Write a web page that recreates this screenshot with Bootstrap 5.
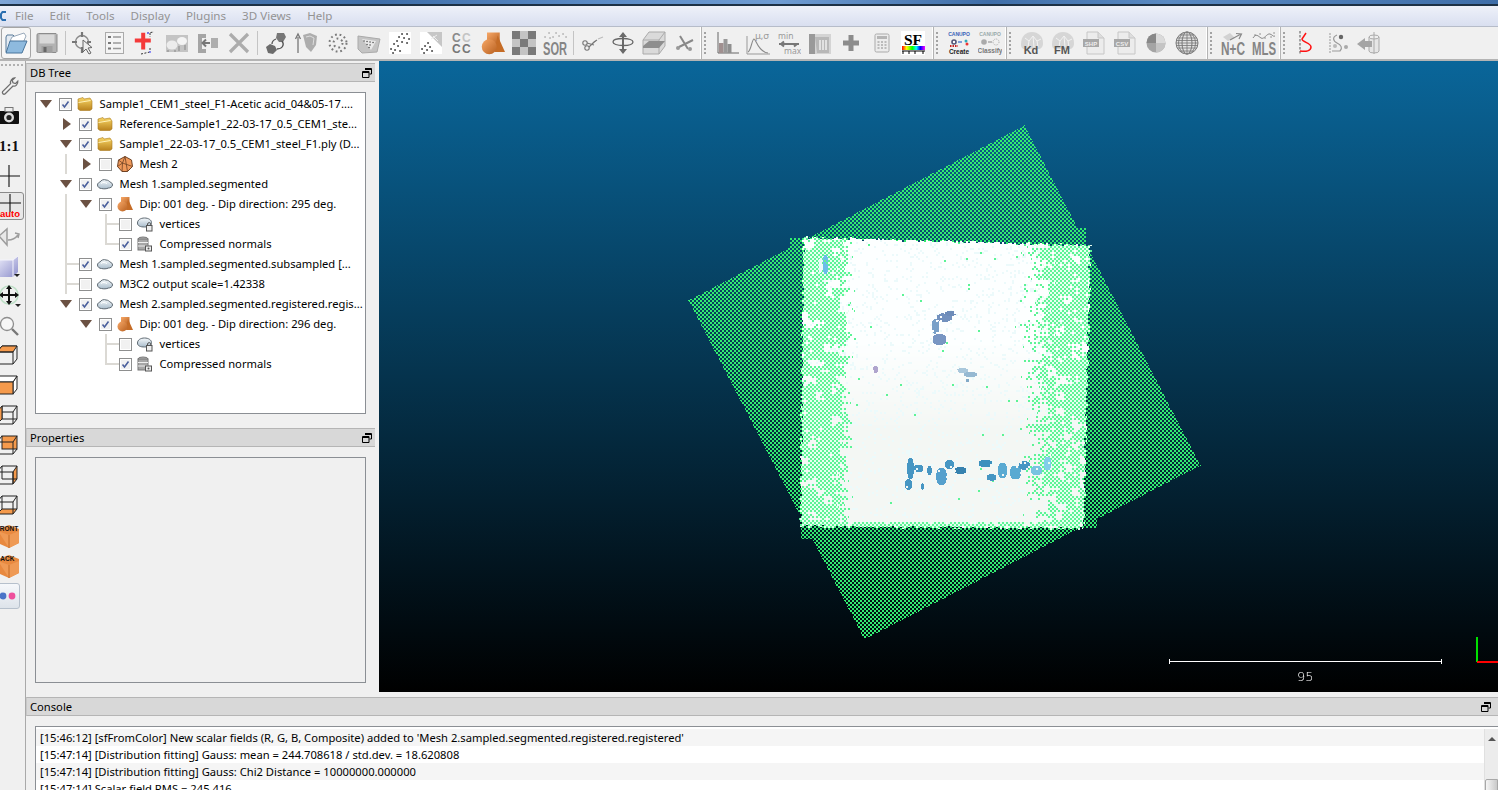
<!DOCTYPE html>
<html lang="en">
<head>
<meta charset="UTF-8">
<title>CloudCompare</title>
<link href="https://cdn.jsdelivr.net/npm/bootstrap@5.3.0/dist/css/bootstrap.min.css" rel="stylesheet">
<style>
    html, body { height: 100%; overflow: hidden; }
    body { background: #f0f0f0; color: #000; font-family: "Noto Sans", "Open Sans", sans-serif; font-size: 11.2px; line-height: 1; }

    .title-strip { height: 6px; flex: none; border-bottom: 2px solid #1d3145; background: linear-gradient(90deg, #7fa6d6 0, #4a78b0 12%, #3f6ea8 25%, #5c8cc6 40%, #6f9cd2 52%, #3f6ea8 66%, #5a8ac2 78%, #3f6ea8 100%); }
    .menu-strip { height: 21px; flex: none; background: linear-gradient(#eef1f9, #d9dff0); border-bottom: 1px solid #b6bcc9; color: #939393; gap: 16px; padding-left: 15px; font-size: 11.6px; }
    .app-logo { width: 7px; height: 14px; margin-left: -15px; margin-right: -8px; }

    .tool-strip { height: 34px; flex: none; border-bottom: 2px solid #b4b4b4; overflow: hidden; }
    .tool-group { height: 100%; border-right: 1px solid #b4b4b4; border-left: 1px solid #fff; }
    .tool-btn { width: 31px; height: 32px; flex: none; }
    .tool-btn svg { width: 24px; height: 24px; display: block; }
    .tool-sep { width: 6px; flex: none; height: 24px; position: relative; }
    .tool-sep::after { content: ""; display: block; width: 1px; height: 100%; margin-left: 3px; background: #c4c4c4; }
    .tool-grip { width: 9px; height: 24px; flex: none; background: radial-gradient(circle, #a3a3a3 0.8px, transparent 1px) 1px 0 / 4px 4px repeat-y; }
    .tool-open { border: 1px solid #a5a5a5; border-radius: 3px; background: #f6f6f6; width: 30px; margin-left: 1px; }

    .main-row { min-height: 0; }
    .main-col { min-width: 0; }
    .side-tools { width: 26px; flex: none; border-right: 1px solid #a9a9a9; overflow: hidden; }
    .side-grip { height: 10px; background: radial-gradient(circle, #b1b1b1 0.8px, transparent 1px) 0 2px / 4px 4px repeat-x; }
    .side-btn { height: 30px; width: 25px; flex: none; }
    .side-btn svg { width: 24px; height: 24px; margin-left: -3px; display: block; flex: none; }
    .side-on { height: 28px; margin: 1px 1px 1px -4px; width: 28px; padding-left: 4px; background: #e8e8e8; border: 1px solid #8a8a8a; border-radius: 3px; }
    .side-flick { height: 26px; margin: 2px 0 2px -4px; width: 24px; padding-left: 4px; background: linear-gradient(#f6f8fb, #dde3ea); border: 1px solid #b6c0cc; border-radius: 3px; }
    .side-flick svg { margin-left: -6px; }

    .dock-col { width: 353px; flex: none; padding: 2px 4px 0 0; }
    .dock-head { height: 19px; flex: none; background: #d8d8d8; border-top: 1px solid #b5b5b5; border-bottom: 1px solid #b5b5b5; border-left: 1px solid #c8c8c8; padding: 1px 3px 0 3px; }
    .dock-float { width: 10px; height: 10px; display: block; }
    .dock-box { margin: 10px 0 0 9px; width: 331px; border: 1px solid #8b8f94; }
    .tree-box { height: 322px; background: #fff; margin-bottom: 14px; padding-top: 1px; overflow: hidden; }
    .props-box { height: 226px; background: #f0f0f0; }

    .tree-row { height: 20px; white-space: nowrap; }
    .tree-cell { width: 20px; height: 20px; flex: none; position: relative; display: block; }
    .tree-v::before, .tree-t::before, .tree-l::before { content: ""; position: absolute; left: 9px; top: 0; width: 2px; height: 100%; background: #dbd9d4; }
    .tree-l::before { height: 11px; }
    .tree-t::after, .tree-l::after { content: ""; position: absolute; left: 9px; top: 9px; width: 14px; height: 2px; background: #dbd9d4; }
    .tree-down::after { content: ""; position: absolute; left: 4px; top: 6px; border-style: solid; border-width: 8px 6px 0; border-color: #6b5142 transparent transparent; }
    .tree-right::after { content: ""; position: absolute; left: 7px; top: 4px; border-style: solid; border-width: 6px 0 6px 8px; border-color: transparent transparent transparent #6b5142; }
    .tree-check.form-check-input { width: 13px; height: 13px; margin: 0 0 0 3px; flex: none; border: 1px solid #8e8f8f; border-radius: 0; background-color: #f1f1f1; box-shadow: inset 0 0 0 1px #fff; opacity: 1; }
    .tree-check.form-check-input:checked { background-color: #f1f1f1; border-color: #8e8f8f; background-size: 11px 11px; background-image: url("data:image/svg+xml,%3csvg xmlns='http://www.w3.org/2000/svg' viewBox='0 0 11 11'%3e%3cpath fill='none' stroke='%234a5f9c' stroke-width='1.6' d='M2.5 5.5l2 2.5 4-5.5'/%3e%3c/svg%3e"); }
    .tree-icon { width: 16px; height: 16px; margin: 0 6.5px 0 5px; flex: none; display: block; }

    .view-row { flex: none; }
    .gl-view { flex: 1; height: 631px; position: relative; background: linear-gradient(#0a669a, #000); overflow: hidden; }
    .gl-cloud { display: block; }
    .scale-bar { position: absolute; left: 790px; top: 598px; width: 273px; height: 5px; border-left: 1px solid #fff; border-right: 1px solid #fff; }
    .scale-bar::after { content: ""; display: block; margin-top: 2px; height: 1px; background: #fff; }
    .scale-num { position: absolute; left: 918px; top: 609px; color: #fff; font-size: 13px; font-family: "DejaVu Sans", sans-serif; font-weight: 200; }
    .axis-y { position: absolute; left: 1097px; top: 576px; width: 2px; height: 25px; background: #00e000; }
    .axis-x { position: absolute; left: 1098px; top: 600px; width: 21px; height: 2px; background: #f00; }

    .console-wrap { flex: 1; min-height: 0; margin-top: 5px; }
    .console-box { margin: 10px 0 0 9px; border: 1px solid #8b8f94; border-bottom: 0; border-right: 0; flex: 1; min-height: 0; overflow: hidden; background: #fff; padding-top: 2px; }
    .console-rows { flex: 1; min-width: 0; }
    .console-row.list-group-item { height: 17px; padding: 0 0 0 4px; border: 0; border-radius: 0; font-size: 11.2px; line-height: 17px; background: #fff; color: #000; white-space: nowrap; }
    .console-row.list-group-item:nth-child(odd) { background: #f5f5f5; }
    .console-scroll { width: 14px; flex: none; background: #ececec; border-left: 1px solid #e0e0e0; }
    .scroll-up { height: 50px; flex: none; padding-top: 8px; }
    .scroll-up::after { content: ""; display: block; margin-left: 3px; border-style: solid; border-width: 0 4px 4px; width: 0; border-color: transparent transparent #555; }
    .scroll-thumb { height: 30px; flex: none; background: linear-gradient(90deg, #f6f6f6, #c9c9c9); border: 1px solid #a8a8a8; border-radius: 2px 0 0 0; }

    .ic-t { font-family: "Liberation Sans", sans-serif; font-weight: 700; }
    .ic-s { font-family: "Liberation Serif", serif; font-weight: 700; }
    .ic-n { font-family: "Liberation Sans Narrow", "Liberation Sans", sans-serif; font-weight: 700; }
</style>
</head>
<body class="d-flex flex-column">

<svg width="0" height="0" class="d-block">
    <defs>
        <linearGradient id="g-folder" x1="0" y1="0" x2="0" y2="1"><stop offset="0" stop-color="#f9d766"/><stop offset="1" stop-color="#b9821d"/></linearGradient>
        <linearGradient id="g-orange" x1="0" y1="0" x2="1" y2="1"><stop offset="0" stop-color="#f7a868"/><stop offset="1" stop-color="#b8601f"/></linearGradient>
        <linearGradient id="g-cloud" x1="0" y1="0" x2="0" y2="1"><stop offset="0" stop-color="#f4f8fb"/><stop offset="1" stop-color="#a9bccb"/></linearGradient>
        <linearGradient id="g-lilac" x1="0" y1="0" x2="1" y2="1"><stop offset="0" stop-color="#eeeefb"/><stop offset="1" stop-color="#8e90cc"/></linearGradient>
        <linearGradient id="g-bar" x1="0" y1="0" x2="1" y2="0"><stop offset="0" stop-color="#f00"/><stop offset=".2" stop-color="#ff0"/><stop offset=".45" stop-color="#0f0"/><stop offset=".62" stop-color="#0ff"/><stop offset=".8" stop-color="#00f"/><stop offset="1" stop-color="#f0f"/></linearGradient>

        <symbol id="t-folder" viewBox="0 0 16 16"><path d="M1 3l5-1.500 1 1.500 6-1 2 3v8l-2 1.500H3L1 13z" fill="url(#g-folder)" stroke="#a97a1f" stroke-width=".6"/><path d="M1.500 6.500l12-2" stroke="#fff2b8" stroke-width="1"/></symbol>
        <symbol id="t-cloud" viewBox="0 0 16 16"><path d="M.5 9c0-2 1.500-2.500 2.500-3 1-2 4-3 6-2 2 0 3 1 4 2 1.500.500 2.500 1.500 2.500 3 0 2-2.500 3-4 3-2 1-5 1-7 .500C2.500 12.500.5 11 .5 9z" fill="url(#g-cloud)" stroke="#5f6a73" stroke-width="1"/><path d="M4 7.500c2-1.500 4-1 6 0" stroke="#fff" fill="none"/></symbol>
        <symbol id="t-cloudlock" viewBox="0 0 16 16"><path d="M.5 7c0-3 3-5 7-5 4 0 7 2 7 4.500S11.500 11 7.500 11 .5 10 .5 7z" fill="url(#g-cloud)" stroke="#5f6a73"/><rect x="9.500" y="9.500" width="5.500" height="5.500" fill="#eee" stroke="#555"/><path d="M10.500 9.500V8a1.800 1.800 0 0 1 3.500 0v1.500" fill="none" stroke="#555"/></symbol>
        <symbol id="t-dblock" viewBox="0 0 16 16"><ellipse cx="6" cy="3" rx="5" ry="2" fill="#b9b9b9" stroke="#777"/><rect x="1" y="3" width="10" height="11" fill="#a7a7a7" stroke="#777"/><path d="M1 6.500h10M1 10h10" stroke="#eee"/><rect x="8.500" y="10" width="6" height="5" fill="#eee" stroke="#555"/><circle cx="11.500" cy="12.500" r="1" fill="#555"/></symbol>
        <symbol id="t-mesh" viewBox="0 0 16 16"><path d="M8 .5l6.500 3.500 1 6.500L10.500 15.500H5L.5 10.500l1-6.500z" fill="#f0995a" stroke="#6e4224"/><path d="M8 .5L5.500 7 .5 10.500M5.500 7l10 3.500M5.500 7l-.5 8.500M8 .5l2.500 15M1.500 4l4 3" stroke="#6e4224" stroke-width=".8" fill="none"/></symbol>
        <symbol id="t-dip" viewBox="0 0 16 16"><rect x="4" y="1" width="8.500" height="8" fill="url(#g-orange)"/><path d="M11 3l5 11h-7z" fill="#c56c26"/><circle cx="5.500" cy="10.500" r="5" fill="url(#g-orange)"/></symbol>

        <symbol id="i-open" viewBox="0 0 24 24"><path d="M2 21V6l1-2h6l2 2h3v4" fill="#e4ebf2" stroke="#587a99"/><path d="M6 10l2-4 12-4 2 3-3 7z" fill="#fff" stroke="#9ab"/><path d="M2 22l4-12h17l-5 12z" fill="#8ebade" stroke="#48759c"/></symbol>
        <symbol id="i-save" viewBox="0 0 24 24"><path d="M2 4a1.500 1.500 0 0 1 1.500-1.500H21l1 1v17l-1 1H3.500L2 21z" fill="#b3b3b3" stroke="#8b8b8b"/><rect x="4.500" y="3.500" width="15" height="9" fill="#d8d8d8"/><rect x="6.500" y="15" width="11" height="7" fill="#a0a0a0"/><rect x="8.500" y="16" width="3" height="5" fill="#666"/></symbol>
        <symbol id="i-target" viewBox="0 0 24 24"><circle cx="10" cy="11" r="6.500" fill="none" stroke="#8a8a8a" stroke-width="1.400"/><path d="M10 1v5M10 16v6M0 11h5M15 11h4" stroke="#777" stroke-width="2.200"/><path d="M11 9v12l3-3 3 5 2-1-3-5 4-.5z" fill="#eee" stroke="#666"/></symbol>
        <symbol id="i-list" viewBox="0 0 24 24"><rect x="2.500" y="1.500" width="18" height="21" fill="#f4f4f4" stroke="#aaa"/><path d="M5 6h3M5 12h3M5 17.500h3" stroke="#777" stroke-width="2"/><path d="M10 6h8M10 12h8M10 17.500h8" stroke="#999" stroke-width="1.500"/></symbol>
        <symbol id="i-redplus" viewBox="0 0 24 24"><path d="M9 1h5v7h7v5h-7v9H9v-9H1V8h8z" transform="translate(0 1) scale(.8)" fill="#f43a3a"/><path d="M13 2l7-1M16 2v4M16 17v4M7 23l9-2" stroke="#333" stroke-dasharray="2 1.500" fill="none"/><circle cx="14" cy="2" r="1" fill="#77f"/><circle cx="16" cy="21" r="1" fill="#77f"/></symbol>
        <symbol id="i-sheep" viewBox="0 0 24 24"><rect x="1" y="4" width="22" height="17" fill="#c4c4c4"/><ellipse cx="7" cy="14" rx="5.500" ry="4.500" fill="#ececec"/><ellipse cx="17" cy="10" rx="5" ry="4" fill="#f4f4f4"/><path d="M3 19v2M10 19v2M14 15v5M20 14v5" stroke="#888"/></symbol>
        <symbol id="i-arrowbox" viewBox="0 0 24 24"><path d="M2 3h8v4H6v11h4v4H2z" fill="#a5a5a5"/><rect x="15" y="7" width="7" height="10" fill="#aeaeae"/><path d="M7 12h7M10 8.500L6.500 12l3.500 3.500" stroke="#777" stroke-width="2" fill="none"/></symbol>
        <symbol id="i-x" viewBox="0 0 24 24"><path d="M3 3l18 18M21 3L3 21" stroke="#acacac" stroke-width="3.200"/></symbol>
        <symbol id="i-blobs" viewBox="0 0 24 24"><path d="M13 2h7l2 4-3 5h-4l-3-4z" fill="#777"/><path d="M2 16l4-3 5 2 2 4-4 4-5-1z" fill="#6c6c6c"/><path d="M18 10c3 4 0 8-5 8" fill="none" stroke="#555" stroke-width="1.300"/><path d="M12 8c-3 1-4 3-4 5" fill="none" stroke="#555" stroke-width="1.300"/></symbol>
        <symbol id="i-shield" viewBox="0 0 24 24"><path d="M3 22V6M0.500 8L3 3l2.500 5" stroke="#777" stroke-width="1.300" fill="none"/><path d="M8 4l7-2 7 3-1 9-5 7-5-5z" fill="#adadad"/><path d="M11 6l4-1 4 2-1 7" stroke="#ddd" fill="none"/></symbol>
        <symbol id="i-ring" viewBox="0 0 24 24"><circle cx="12" cy="12" r="8.500" fill="none" stroke="#7a7a7a" stroke-width="2" stroke-dasharray="1.800 2.800"/><circle cx="12" cy="12" r="4.500" fill="none" stroke="#7a7a7a" stroke-width="2" stroke-dasharray="1.800 3"/></symbol>
        <symbol id="i-tile" viewBox="0 0 24 24"><path d="M1 5l22 3-3 13-15 1-4-4z" fill="#c4c4c4" stroke="#aaa"/><path d="M5 8l14 2-5 9z" fill="#eaeaea"/><path d="M7 10h.1M10 10.500h.1M13 11h.1M16 11.500h.1M10 13.500h.1M13 14h.1M12 16.500h.1" stroke="#555" stroke-width="1.500" stroke-linecap="round"/></symbol>
        <symbol id="i-dots" viewBox="0 0 24 24"><rect x="1" y="1" width="22" height="22" fill="#fff"/><path d="M14 3h.1M19 3h.1M11 6h.1M16 7h.1M21 8h.1M9 10h.1M14 11h.1M19 12h.1M6 13h.1M10 15h.1M3 18h.1M7 19h.1M12 20h.1M5 22h.1" stroke="#555" stroke-width="2" stroke-linecap="round"/></symbol>
        <symbol id="i-dots2" viewBox="0 0 24 24"><rect x="1" y="1" width="22" height="22" fill="#fff"/><path d="M8 1h15v15z" fill="#c6c6c6"/><path d="M14 5l5 5M12 8l6-4" stroke="#eee"/><path d="M9 12h.1M6 15h.1M11 16h.1M3 18h.1M8 19h.1M13 20h.1M5 22h.1" stroke="#555" stroke-width="2" stroke-linecap="round"/></symbol>
        <symbol id="i-cc" viewBox="0 0 24 24"><text x="2" y="11" font-size="12" class="ic-t" fill="#8a8a8a">C</text><text x="12" y="11" font-size="12" class="ic-t" fill="#c4c4c4">C</text><text x="2" y="22" font-size="12" class="ic-t" fill="#777">C</text><text x="12" y="22" font-size="12" class="ic-t" fill="#777">C</text></symbol>
        <symbol id="i-check" viewBox="0 0 24 24"><rect width="24" height="24" fill="#c4c4c4"/><path d="M0 0h8v8H0zM16 0h8v8h-8zM8 8h8v8H8zM0 16h8v8H0zM16 16h8v8h-8z" fill="#7a7a7a"/></symbol>
        <symbol id="i-sor" viewBox="0 0 24 24"><text x="0" y="24" font-size="18" class="ic-n" fill="#858585" textLength="24" lengthAdjust="spacingAndGlyphs">SOR</text><path d="M2 6h.1M6 2h.1M10 6h.1M13 2h.1M16 5h.1M20 3h.1M23 6h.1M7 7h.1" stroke="#888" stroke-width="1.300" stroke-linecap="round"/></symbol>
        <symbol id="i-scissors" viewBox="0 0 24 24"><circle cx="5" cy="12" r="2.200" fill="none" stroke="#777" stroke-width="1.100"/><circle cx="7" cy="17" r="2.200" fill="none" stroke="#777" stroke-width="1.100"/><path d="M7 12l7 2M9 16l5-5 3-2" stroke="#777" stroke-width="1.100"/><path d="M18 8l5-2" stroke="#bbb" stroke-width="1.100"/></symbol>
        <symbol id="i-move" viewBox="0 0 24 24"><path d="M12 1l4 5h-3v12h3l-4 5-4-5h3V6H8z" fill="#6a6a6a"/><path d="M2 11c0-2 4-3.500 10-3.500S22 9 22 11s-4 3.500-10 3.500S2 13 2 11z" fill="none" stroke="#666" stroke-width="1.300"/></symbol>
        <symbol id="i-box" viewBox="0 0 24 24"><path d="M1 9l6-8h16v14l-6 8H1z" fill="#dadada" stroke="#aaa"/><path d="M1 9h16V23M17 9l6-8" stroke="#aaa" fill="none"/><path d="M1 15l6-5h16l-6 7H1z" fill="#8e8e8e"/></symbol>
        <symbol id="i-cut" viewBox="0 0 24 24"><path d="M7 5l8 13M20 9L6 16" stroke="#888" stroke-width="2" fill="none"/><circle cx="17" cy="18" r="2" fill="#999"/><circle cx="5" cy="17" r="2" fill="#999"/></symbol>
        <symbol id="i-hist" viewBox="0 0 24 24"><path d="M3 1v21h21" stroke="#666" fill="none"/><rect x="4" y="12" width="4.500" height="10" fill="#a09090"/><rect x="8.500" y="8" width="4" height="14" fill="#999"/><rect x="12.500" y="13" width="4" height="9" fill="#8f8f8f"/></symbol>
        <symbol id="i-gauss" viewBox="0 0 24 24"><path d="M1 5v18h23" stroke="#999" fill="none"/><path d="M2 21c3-1 4-13 6-13s4 13 14 14" stroke="#888" fill="none" stroke-width="1.100"/><text x="9" y="8" font-size="9.500" fill="#999">μ,σ</text></symbol>
        <symbol id="i-minmax" viewBox="0 0 24 24"><text x="1" y="8" font-size="8.500" fill="#999">min</text><text x="7" y="23" font-size="8.500" fill="#999">max</text><path d="M2 13h20M4 13l3-2.500M4 13l3 2.500M20 13l-3 2.500" stroke="#777" stroke-width="2" fill="none"/></symbol>
        <symbol id="i-trash" viewBox="0 0 24 24"><rect x="1" y="3" width="22" height="20" fill="#d4d4d4"/><rect x="1" y="3" width="6" height="20" fill="#999"/><path d="M7 6h14v16H9z" fill="#b8b8b8"/><path d="M12 9v10M15 9v10M18 9v10" stroke="#eee" stroke-width="1.500"/></symbol>
        <symbol id="i-plus" viewBox="0 0 24 24"><path d="M9.500 4h5v5.500H20v5h-5.500V20h-5v-5.500H4v-5h5.500z" fill="#8c8c8c"/></symbol>
        <symbol id="i-calc" viewBox="0 0 24 24"><rect x="5" y="3" width="14" height="18" rx="1.500" fill="#ececec" stroke="#aaa"/><rect x="7" y="5" width="10" height="3" fill="#b5b5b5"/><path d="M7.500 11h9M7.500 14h9M7.500 17h9" stroke="#aaa" stroke-width="1.500" stroke-dasharray="2 1.500"/></symbol>
        <symbol id="i-sf" viewBox="0 0 24 24"><rect width="24" height="24" fill="#fff"/><text x="12" y="14" font-size="15.500" text-anchor="middle" class="ic-s" fill="#000">SF</text><rect x="1" y="15" width="23" height="4" fill="url(#g-bar)"/><path d="M1 20h23M2 20v3M8 20v3M14 20v3M22 20v3" stroke="#000"/></symbol>
        <symbol id="i-canu" viewBox="0 0 24 24"><text x="12" y="5" font-size="5" text-anchor="middle" class="ic-t" fill="#3a62b8">CANUPO</text><circle cx="7" cy="11" r="2.800" fill="#557"/><circle cx="7" cy="11" r="1.200" fill="#fff"/><path d="M11 11h4" stroke="#36c" stroke-width="1.200"/><circle cx="19" cy="10" r="1.500" fill="#3ab"/><circle cx="20" cy="13" r="1.500" fill="#e33"/><path d="M3 15h8" stroke="#c22" stroke-width="2" stroke-dasharray="1.500 1"/><text x="12" y="23" font-size="6.500" class="ic-t" text-anchor="middle" fill="#222">Create</text></symbol>
        <symbol id="i-canu2" viewBox="0 0 24 24"><text x="12" y="5" font-size="5" text-anchor="middle" class="ic-t" fill="#9aa">CANUPO</text><circle cx="6" cy="11" r="2.800" fill="#aaa"/><path d="M10 11h4" stroke="#999" stroke-width="1.200"/><circle cx="18" cy="11" r="3" fill="none" stroke="#aaa" stroke-dasharray="1 1"/><text x="12" y="22" font-size="6.500" class="ic-t" text-anchor="middle" fill="#777">Classify</text></symbol>
        <symbol id="i-brain" viewBox="0 0 24 24"><path d="M1 13C1 5 6 1 12 1s11 4 11 11c0 4-2 6-5 6H5c-3 0-4-2-4-5z" fill="#d6d6d6"/><path d="M5 7l4 3 4-5 4 5 4-2M9 10l-1 6M13 5l1 11M17 10l1 6" stroke="#f2f2f2" fill="none"/></symbol>
        <symbol id="i-shp" viewBox="0 0 24 24"><path d="M5 1h11l6 6v16H5z" fill="#ececec" stroke="#c6c6c6"/><path d="M16 1v6h6" fill="#ddd" stroke="#c6c6c6"/><rect x="1" y="8" width="16" height="8" fill="#a8a8a8"/></symbol>
        <symbol id="i-pie" viewBox="0 0 24 24"><circle cx="12" cy="12" r="9.500" fill="#a4a4a4"/><path d="M12 12L12 2.500A9.500 9.500 0 0 1 21.500 12z" fill="#dadada"/><path d="M12 12L2.500 12A9.500 9.500 0 0 1 12 2.500z" fill="#888"/><path d="M12 12L21.500 12A9.500 9.500 0 0 1 12 21.500z" fill="#c4c4c4"/></symbol>
        <symbol id="i-globe" viewBox="0 0 24 24"><circle cx="12" cy="12" r="11" fill="#e2e2e2" stroke="#777"/><ellipse cx="12" cy="12" rx="5" ry="11" fill="none" stroke="#777"/><ellipse cx="12" cy="12" rx="8.500" ry="11" fill="none" stroke="#888"/><path d="M12 1v22M1 12h22M2 7h20M2 17h20M5 4h14M5 20h14M1.500 9.500h21M1.500 14.500h21" stroke="#777" stroke-width=".8"/></symbol>
        <symbol id="i-nc" viewBox="0 0 24 24"><path d="M2 6l7-4 5 5-7 3z" fill="#d2d2d2"/><path d="M9 9l11-6M15 2.500l5.500.5-2.500 5" stroke="#888" fill="none" stroke-width="1.200"/><text x="0" y="24" font-size="18" class="ic-n" fill="#858585" textLength="24" lengthAdjust="spacingAndGlyphs">N+C</text></symbol>
        <symbol id="i-mls" viewBox="0 0 24 24"><path d="M1 7c3-5 5-2 8 0s6-5 9-4 3 3 5 2" fill="none" stroke="#888"/><path d="M3 4h.1M8 3h.1M13 7h.1M19 6h.1M22 2h.1" stroke="#888" stroke-width="1.500" stroke-linecap="round"/><text x="0" y="24" font-size="18" class="ic-n" fill="#858585" textLength="24" lengthAdjust="spacingAndGlyphs">MLS</text></symbol>
        <symbol id="i-redS" viewBox="0 0 24 24"><path d="M6 0v24" stroke="#555" stroke-dasharray="2.500 1.500"/><path d="M12 2l-4 6c0 3 9 4 9 8s-5 5-11 4" fill="none" stroke="#f11" stroke-width="1.500"/></symbol>
        <symbol id="i-sdots" viewBox="0 0 24 24"><path d="M5 2v20" stroke="#999" stroke-dasharray="2 1"/><path d="M12 4C7 6 8 10 12 12s6 5 3 8l-8 0" fill="none" stroke="#999" stroke-width="1.200"/><circle cx="16" cy="6" r="2.200" fill="#666"/><circle cx="21" cy="16" r="2" fill="#aaa"/><circle cx="10" cy="15" r="2" fill="#bbb"/></symbol>
        <symbol id="i-cyl" viewBox="0 0 24 24"><path d="M13 6v14a5 2 0 0 0 10 0V6" fill="#e6e6e6" stroke="#aaa"/><ellipse cx="18" cy="6" rx="5" ry="2" fill="#eee" stroke="#aaa"/><path d="M18 1v22" stroke="#aaa"/><path d="M1 13l8-6v3h7v6H9v3z" fill="#a5a5a5"/></symbol>

        <symbol id="s-wrench" viewBox="-3 -3 30 30"><path d="M19 2l-3 3 1 3 3 1 3-3c.5 4-3 7-6 6L7 22c-2 1-4-1-3-3L14 9c-1-3 2-7 5-7z" fill="#f1f1f1" stroke="#6d6d6d" stroke-width="1.600"/></symbol>
        <symbol id="s-camera" viewBox="0 0 24 24"><rect x="2" y="7" width="20" height="13" rx="1" fill="#111"/><rect x="8" y="3.500" width="8" height="4" fill="#eee" stroke="#777"/><circle cx="12" cy="13.500" r="5" fill="#ddd"/><circle cx="12" cy="13.500" r="2.600" fill="#222"/></symbol>
        <symbol id="s-cross" viewBox="0 0 24 24"><path d="M12 1v22M1 12h22" stroke="#111" stroke-width="1.100"/></symbol>
        <symbol id="s-auto" viewBox="0 0 24 24"><path d="M12 0v18M1 9h22" stroke="#111" stroke-width="1.100"/><text x="12" y="23" font-size="9.500" text-anchor="middle" class="ic-t" fill="#f00">auto</text></symbol>
        <symbol id="s-cone" viewBox="0 0 24 24"><path d="M2 12l8-7v16z" fill="#e8e8e8" stroke="#9c9c9c" stroke-width="1.500"/><path d="M11 16c4 0 7-1 10-5M18 9l4 1-1 4" stroke="#9c9c9c" stroke-width="1.500" fill="none"/></symbol>
        <symbol id="s-lilac" viewBox="0 0 24 24"><path d="M0 6h16l5-4v16l-5 5H0z" fill="url(#g-lilac)"/><path d="M0 6h16l5-4M16 6v17" stroke="#f4f4fc" fill="none"/><path d="M17 20h6l-3 3z" fill="#222"/></symbol>
        <symbol id="s-rot" viewBox="0 0 24 24"><circle cx="12" cy="11" r="9" fill="none" stroke="#bfe0c8" stroke-width="1.500"/><path d="M12 1l3 4h-2v5h5V8l4 3-4 3v-2h-5v5h2l-3 4-3-4h2v-5H6v2l-4-3 4-3v2h5V5H9z" fill="#111"/><path d="M18 20h6l-3 3z" fill="#222"/></symbol>
        <symbol id="s-zoom" viewBox="0 0 24 24"><circle cx="10" cy="10" r="6.500" fill="#f7f7f7" stroke="#8e8e8e" stroke-width="1.300"/><path d="M15 15l6 6" stroke="#777" stroke-width="2.400"/></symbol>
        <symbol id="s-cube-top" viewBox="0 0 24 24"><path d="M0 8l5-6h15v13l-4 5H0z" fill="none" stroke="#222"/><path d="M0 8l5-6h15l-4 6z" fill="#f59a4c" stroke="#222"/><path d="M0 8h16v12" fill="none" stroke="#222"/></symbol>
        <symbol id="s-cube-front" viewBox="0 0 24 24"><path d="M16 8l4-6v13l-4 5z" fill="#fff" stroke="#222"/><path d="M0 2h20l-4 6H0z" fill="#fff" stroke="#222"/><rect x="-1" y="8" width="17" height="12" fill="#f59a4c" stroke="#222"/></symbol>
        <symbol id="s-cube-left" viewBox="0 0 24 24"><path d="M5 2h15v13H5z" fill="none" stroke="#222"/><path d="M0 8h16v12H0z" fill="none" stroke="#222"/><path d="M0 8l5-6v13l-5 5z" fill="#f59a4c" stroke="#222"/><path d="M16 8l4-6M16 20l4-5" stroke="#222"/></symbol>
        <symbol id="s-cube-back" viewBox="0 0 24 24"><rect x="5" y="2" width="15" height="13" fill="#f59a4c" stroke="#222"/><path d="M0 8h16v12H0zM0 8l5-6M16 8l4-6M16 20l4-5" fill="none" stroke="#222"/></symbol>
        <symbol id="s-cube-right" viewBox="0 0 24 24"><path d="M16 8l4-6v13l-4 5z" fill="#f59a4c" stroke="#222"/><path d="M0 8l5-6h15M0 8h16v12H0zM5 2v13h15" fill="none" stroke="#222"/></symbol>
        <symbol id="s-cube-bot" viewBox="0 0 24 24"><path d="M0 20l5-5h15l-4 5z" fill="#f59a4c" stroke="#222"/><path d="M0 8l5-6h15v13M0 8h16v12M0 8v12M16 8l4-6M5 2v13" fill="none" stroke="#222"/></symbol>
        <symbol id="s-front" viewBox="0 0 24 24"><path d="M12 1l10 4v14l-10 5L1 19V5z" fill="#e8893f"/><path d="M1 7l11 4 10-4v12l-10 5z" fill="#ef9a55"/><path d="M12 11v13" stroke="#c46a26"/><text x="10" y="7" font-size="6.500" class="ic-t" text-anchor="middle" fill="#111">FRONT</text></symbol>
        <symbol id="s-back" viewBox="0 0 24 24"><path d="M12 1l10 4v14l-10 5L1 19V5z" fill="#e8893f"/><path d="M1 7l11 4 10-4v12l-10 5z" fill="#ef9a55"/><path d="M12 11v13" stroke="#c46a26"/><text x="8" y="7" font-size="6.500" class="ic-t" text-anchor="middle" fill="#111">BACK</text></symbol>
        <symbol id="s-flick" viewBox="0 0 24 24"><circle cx="8" cy="12" r="3.400" fill="#4a74c8"/><circle cx="17" cy="12" r="3.400" fill="#ee4f9c"/></symbol>
        <symbol id="d-float" viewBox="0 0 10 10"><path d="M3 .5h6.500V6H7.500M.5 3.500h6.500v6H.5z" fill="none" stroke="#000"/><path d="M3 1.500h6.500M.5 4.500h6.500" stroke="#000"/></symbol>
    </defs>
</svg>

<div class="title-strip"></div>

<nav class="menu-strip d-flex align-items-center">
    <svg class="app-logo" viewBox="0 0 7 14"><path d="M6 3H2.500L1 5v4l1.500 2H6" fill="none" stroke="#2b6fb0" stroke-width="2"/></svg>
    <span>File</span><span>Edit</span><span>Tools</span><span>Display</span><span>Plugins</span><span>3D Views</span><span>Help</span>
</nav>

<div class="tool-strip d-flex align-items-start">
    <div class="d-flex align-items-center" id="bar1"></div>
    <div class="tool-group"></div>
    <div class="tool-grip align-self-center"></div>
    <div class="d-flex align-items-center" id="bar2"></div>
    <div class="tool-group ms-1"></div>
    <div class="tool-grip align-self-center"></div>
    <div class="d-flex align-items-center" id="bar3"></div>
    <div class="tool-group"></div>
    <div class="tool-grip align-self-center"></div>
    <div class="d-flex align-items-center" id="bar4"></div>
    <div class="tool-group ms-1"></div>
    <div class="tool-grip align-self-center"></div>
    <div class="d-flex align-items-center" id="bar5"></div>
    <div class="tool-group"></div>
    <div class="tool-grip align-self-center"></div>
    <div class="d-flex align-items-center" id="bar6"></div>
</div>

<div class="main-row d-flex flex-grow-1">
    <div class="side-tools d-flex flex-column">
        <div class="side-grip"></div>
        <div id="sidebar" class="d-flex flex-column"></div>
    </div>

    <div class="main-col d-flex flex-column flex-grow-1">
        <div class="view-row d-flex">
            <div class="dock-col d-flex flex-column">
                <div class="dock-head d-flex align-items-center justify-content-between"><span>DB Tree</span><svg class="dock-float"><use href="#d-float"/></svg></div>
                <div class="dock-box tree-box" id="tree"></div>
                <div class="dock-head d-flex align-items-center justify-content-between"><span>Properties</span><svg class="dock-float"><use href="#d-float"/></svg></div>
                <div class="dock-box props-box"></div>
            </div>
            <div class="gl-view">
                <canvas class="gl-cloud" id="cloud" width="1119" height="631"></canvas>
                <div class="scale-bar"></div>
                <div class="scale-num">95</div>
                <div class="axis-y"></div>
                <div class="axis-x"></div>
            </div>
        </div>

        <div class="console-wrap d-flex flex-column">
            <div class="dock-head d-flex align-items-center justify-content-between"><span>Console</span><svg class="dock-float me-1"><use href="#d-float"/></svg></div>
            <div class="console-box d-flex">
                <div class="console-rows list-group">
                    <div class="console-row list-group-item">[15:46:12] [sfFromColor] New scalar fields (R, G, B, Composite) added to 'Mesh 2.sampled.segmented.registered.registered'</div>
                    <div class="console-row list-group-item">[15:47:14] [Distribution fitting] Gauss: mean = 244.708618 / std.dev. = 18.620808</div>
                    <div class="console-row list-group-item">[15:47:14] [Distribution fitting] Gauss: Chi2 Distance = 10000000.000000</div>
                    <div class="console-row list-group-item">[15:47:14] Scalar field RMS = 245.416</div>
                </div>
                <div class="console-scroll d-flex flex-column"><div class="scroll-up"></div><div class="scroll-thumb"></div></div>
            </div>
        </div>
    </div>
</div>

<script>
    // toolbars: icon ids, "|" is a thin separator
    function fillBar(id, items) {
        document.getElementById(id).innerHTML = items.map(function (name) {
            if (name === '|') return '<div class="tool-sep"></div>';
            var extra = name === 'i-open' ? ' tool-open' : '';
            return '<div class="tool-btn d-flex align-items-center justify-content-center' + extra + '"><svg><use href="#' + name + '"/></svg></div>';
        }).join('');
    }
    fillBar('bar1', ['i-open', 'i-save', '|', 'i-target', 'i-list', 'i-redplus', 'i-sheep', 'i-arrowbox', 'i-x', '|', 'i-blobs', 'i-shield', 'i-ring', 'i-tile', 'i-dots', 'i-dots2', 'i-cc', 't-dip', 'i-check', 'i-sor', '|', 'i-scissors', 'i-move', 'i-box', 'i-cut']);
    fillBar('bar2', ['i-hist', 'i-gauss', 'i-minmax', 'i-trash', 'i-plus', 'i-calc', 'i-sf']);
    fillBar('bar3', ['i-canu', 'i-canu2']);
    fillBar('bar4', ['b-Kd', 'b-FM', 'd-SHP', 'd-CSV', 'i-pie', 'i-globe']);
    fillBar('bar5', ['i-nc', 'i-mls']);
    fillBar('bar6', ['i-redS', 'i-sdots', 'i-cyl']);

    // brain and document icons carry a label as real text
    document.querySelectorAll('#bar4 svg').forEach(function (svg) {
        var ref = svg.querySelector('use').getAttribute('href').slice(1);
        var kind = ref.split('-')[0], label = ref.split('-')[1];
        if (kind === 'b') {
            svg.setAttribute('viewBox', '0 0 24 24');
            svg.innerHTML = '<use href="#i-brain" width="24" height="24"/><text x="11" y="23" font-size="11" text-anchor="middle" class="ic-t" fill="#555">' + label + '</text>';
        } else if (kind === 'd') {
            svg.setAttribute('viewBox', '0 0 24 24');
            svg.innerHTML = '<use href="#i-shp" width="24" height="24"/><text x="9" y="14.5" font-size="6" text-anchor="middle" class="ic-t" fill="#eee">' + label + '</text>';
        }
    });

    // left vertical toolbar
    var side = [['s-wrench'], ['s-camera'], ['one'], ['s-cross'], ['s-auto', 'side-on'], ['s-cone'], ['s-lilac'], ['s-rot'], ['s-zoom'],
        ['s-cube-top'], ['s-cube-front'], ['s-cube-left'], ['s-cube-back'], ['s-cube-right'], ['s-cube-bot'], ['s-front'], ['s-back'], ['s-flick', 'side-flick']];
    document.getElementById('sidebar').innerHTML = side.map(function (s) {
        var inner = s[0] === 'one'
            ? '<svg viewBox="0 0 24 24"><text x="12" y="17" font-size="15" text-anchor="middle" class="ic-s" fill="#111">1:1</text></svg>'
            : '<svg><use href="#' + s[0] + '"/></svg>';
        return '<div class="side-btn d-flex align-items-center ' + (s[1] || '') + '">' + inner + '</div>';
    }).join('');

    // DB tree: columns before arrow, arrow kind, checked, icon, label
    var rows = [
        [[], 'down', 1, 't-folder', 'Sample1_CEM1_steel_F1-Acetic acid_04&amp;05-17....'],
        [['e'], 'right', 1, 't-folder', 'Reference-Sample1_22-03-17_0.5_CEM1_ste...'],
        [['e'], 'down', 1, 't-folder', 'Sample1_22-03-17_0.5_CEM1_steel_F1.ply (D...'],
        [['e', 'v'], 'right', 0, 't-mesh', 'Mesh 2'],
        [['e'], 'down', 1, 't-cloud', 'Mesh 1.sampled.segmented'],
        [['e', 'v'], 'down', 1, 't-dip', 'Dip: 001 deg. - Dip direction: 295 deg.'],
        [['e', 'v', 'e'], 't', 0, 't-cloudlock', 'vertices'],
        [['e', 'v', 'e'], 'l', 1, 't-dblock', 'Compressed normals'],
        [['e'], 't', 1, 't-cloud', 'Mesh 1.sampled.segmented.subsampled [...'],
        [['e'], 't', 0, 't-cloud', 'M3C2 output scale=1.42338'],
        [['e'], 'down', 1, 't-cloud', 'Mesh 2.sampled.segmented.registered.regis...'],
        [['e', 'e'], 'down', 1, 't-dip', 'Dip: 001 deg. - Dip direction: 296 deg.'],
        [['e', 'e', 'e'], 't', 0, 't-cloudlock', 'vertices'],
        [['e', 'e', 'e'], 'l', 1, 't-dblock', 'Compressed normals']
    ];
    document.getElementById('tree').innerHTML = rows.map(function (r) {
        var cells = r[0].map(function (c) { return '<i class="tree-cell' + (c === 'v' ? ' tree-v' : '') + '"></i>'; }).join('');
        return '<div class="tree-row d-flex align-items-center">' + cells +
            '<i class="tree-cell tree-' + r[1] + '"></i>' +
            '<input class="tree-check form-check-input" type="checkbox"' + (r[2] ? ' checked' : '') + '>' +
            '<svg class="tree-icon"><use href="#' + r[3] + '"/></svg>' +
            '<span>' + r[4] + '</span></div>';
    }).join('');

    // point cloud, drawn pixel by pixel (screen coordinates offset by the view origin)
    (function () {
        var cv = document.getElementById('cloud'), ctx = cv.getContext('2d');
        var W = cv.width, H = cv.height, ox = 379, oy = 61;
        var img = ctx.createImageData(W, H), d = img.data;
        var back1 = [[1024, 125], [1200, 465], [864, 639], [688, 300]];
        var back2 = [[789, 238], [1085, 227], [1097, 527], [801, 539]];
        var sample = [[803, 237], [1090, 245], [1083, 528], [800, 526]];
        var blue = [70, 150, 195];
        var marks = [
            [825, 264, 3, 10, 108, 190, 232], [820, 265, 2, 8, 235, 250, 250],
            [944, 317, 8, 4.5, 115, 145, 190], [935, 326, 4, 8, 120, 160, 200], [939, 339, 7, 6, 120, 150, 195], [950, 313, 6, 2.5, 110, 140, 185],
            [875, 369, 3, 4, 175, 165, 205], [962, 370, 6, 2.5, 170, 200, 220], [970, 374, 7, 2.5, 150, 185, 210], [967, 380, 2, 2, 130, 170, 200],
            [910, 468, 3.5, 11, blue[0], blue[1], blue[2]], [908, 484, 3.5, 6, blue[0], blue[1], blue[2]], [918, 468, 5, 4, blue[0], blue[1], blue[2]],
            [929, 470, 2.5, 5, blue[0], blue[1], blue[2]], [922, 486, 1.5, 4, blue[0], blue[1], blue[2]],
            [941, 476, 5.5, 9, 85, 160, 205], [949, 464, 5, 4.5, blue[0], blue[1], blue[2]], [960, 470, 6, 4, 55, 130, 175],
            [985, 463, 7, 4, 60, 145, 190], [991, 477, 5, 3.5, blue[0], blue[1], blue[2]], [1002, 470, 5, 8, 90, 170, 210], [1015, 472, 6, 7, 90, 170, 210],
            [1024, 465, 6, 4.5, blue[0], blue[1], blue[2]], [1036, 470, 6, 5, 120, 195, 225], [1047, 463, 4, 7, 130, 205, 235]
        ];
        function inside(p, x, y) {
            for (var i = 0; i < 4; i++) {
                var a = p[i], b = p[(i + 1) % 4];
                if ((b[0] - a[0]) * (y - a[1]) - (b[1] - a[1]) * (x - a[0]) < 0) return false;
            }
            return true;
        }
        function hash(x, y) {
            var s = Math.sin(x * 127.1 + y * 311.7) * 43758.5453;
            return s - Math.floor(s);
        }
        function ramp(v, a, b) { return v <= a ? 0 : v >= b ? 1 : (v - a) / (b - a); }
        for (var py = 0; py < H; py++) {
            for (var px = 0; px < W; px++) {
                var x = px + ox, y = py + oy, i = (py * W + px) * 4;
                var cx = x >> 1, cy = y >> 1, on = ((cx + cy) & 1) === 0;
                var r = 0, g = 0, b = 0, a = 0;
                if ((inside(back1, x, y) || inside(back2, x, y)) && on) { r = 50; g = 236; b = 112; a = 255; }
                var jx = x + (hash(0, cy) - .5) * 3, jy = y + (hash(cx, 1) - .5) * 3;
                if (inside(sample, jx, jy)) {
                    var n = hash(cx, cy), patch = hash(x >> 3, y >> 3);
                    var low = ramp(y, 340, 430);
                    var tint = [253 - 9 * low, 255 - 8 * low, 255 - 11 * low];
                    var v = n < .1 ? [236, 250, 251] : tint;
                    // green cells fade out from both side bands towards the clean middle
                    var edgeL = 846 + (hash(3, y >> 2) - .5) * 10, edgeR = 1048 + (hash(5, y >> 2) - .5) * 16;
                    var p = Math.max(.96 * (1 - ramp(x, edgeL - 6, edgeL + 6)), .94 * ramp(x, edgeR - 26, edgeR + 4));
                    p = Math.max(p, .004);
                    if (p > .3 && patch > .86) p *= .25;
                    if (y > 521) p = .9;
                    a = 255;
                    if (on && hash(cx + 7, cy + 3) < p) { r = 92; g = 244; b = 150; }
                    else if (!on && p > .6) { r = 232; g = 255; b = 240; }
                    else { r = v[0]; g = v[1]; b = v[2]; }
                    for (var m = 0; m < marks.length; m++) {
                        var k = marks[m], dx = (x - k[0]) / k[2], dy = (y - k[1]) / k[3];
                        if (dx * dx + dy * dy < 1 && hash(cx + 11, cy + m) < .95) { r = k[4]; g = k[5]; b = k[6]; }
                    }
                }
                d[i] = r; d[i + 1] = g; d[i + 2] = b; d[i + 3] = a;
            }
        }
        ctx.putImageData(img, 0, 0);
    })();
</script>
<script src="https://cdn.jsdelivr.net/npm/bootstrap@5.3.0/dist/js/bootstrap.bundle.min.js"></script>
</body>
</html>
